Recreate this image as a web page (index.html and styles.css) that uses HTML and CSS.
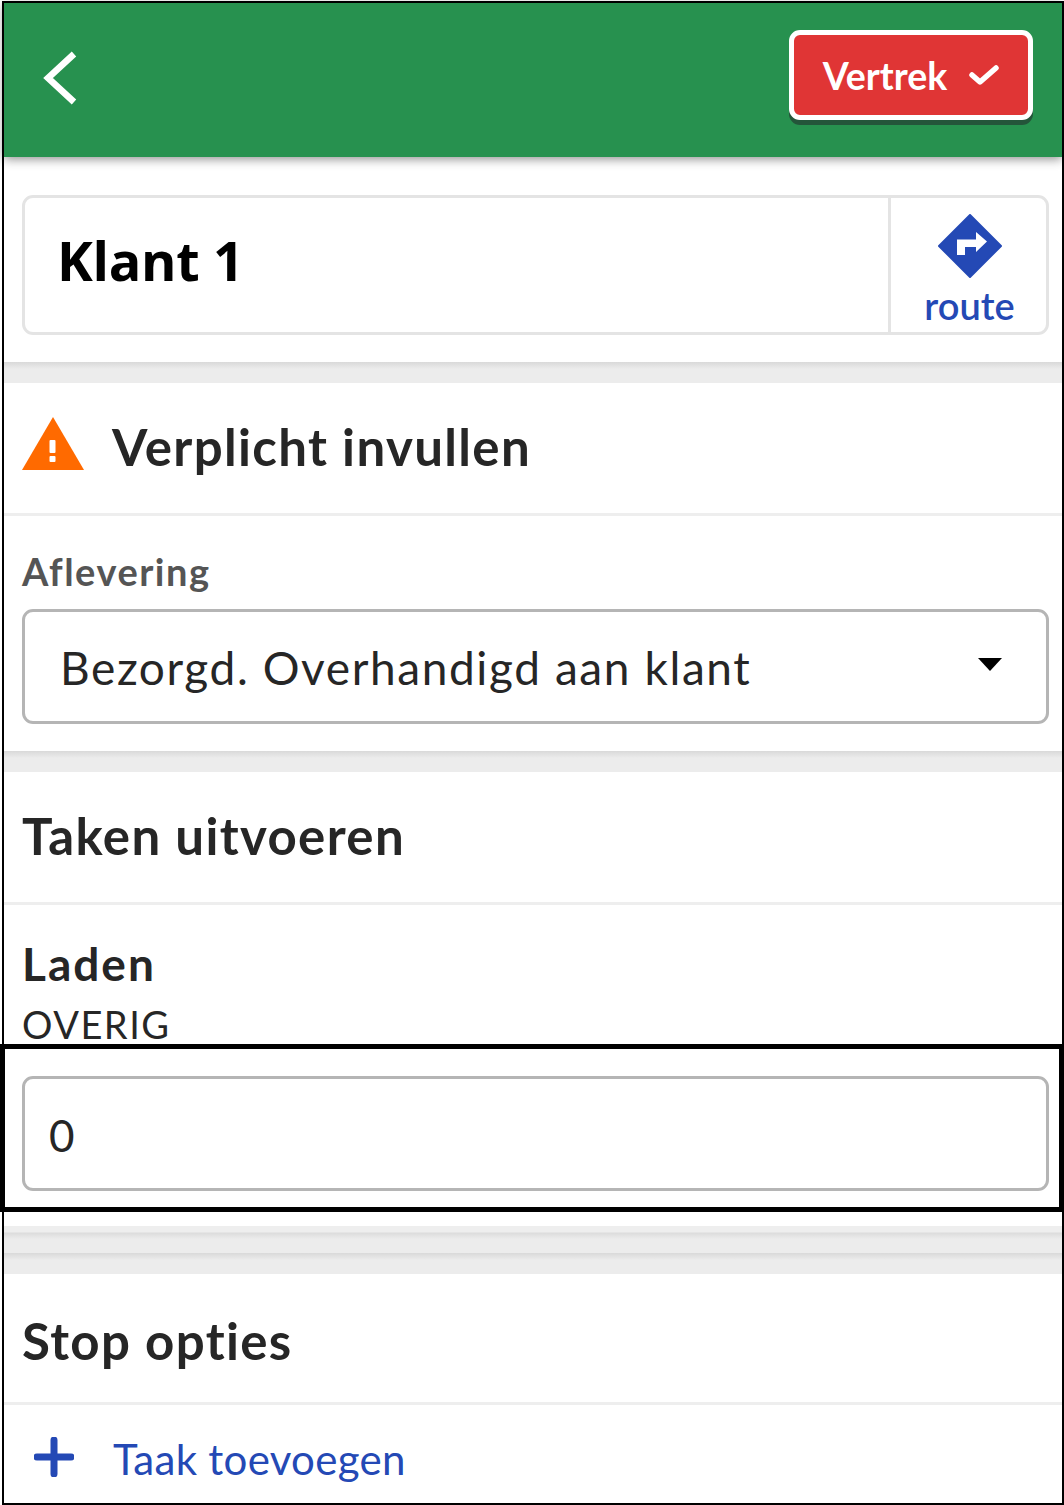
FILE: index.html
```html
<!DOCTYPE html>
<html lang="en">
<head>
    <meta charset="UTF-8">
    <meta name="viewport" content="width=device-width, initial-scale=1.0">
    <title>Klant 1</title>
    <link rel="stylesheet" href="styles.css">
</head>
<body>
    <div class="page">
        <header class="topbar">
            <svg class="back" width="37" height="54" viewBox="0 0 37 54"><path d="M33 3 L7 27 L33 51" fill="none" stroke="#fff" stroke-width="6.5"/></svg>
            <button class="depart" type="button">
                <span>Vertrek</span>
                <svg width="30" height="22" viewBox="0 0 30 22"><path d="M3 11 L11 18 L27 4" fill="none" stroke="#fff" stroke-width="5.5" stroke-linejoin="round" stroke-linecap="round"/></svg>
            </button>
        </header>

        <div class="customer-wrap">
            <div class="customer">
                <div class="customer-name">Klant 1</div>
                <div class="route">
                    <svg width="64" height="64" viewBox="0 0 64 64">
                        <path d="M32 1 L63 32 L32 63 L1 32 Z" fill="#2449b5" stroke="#2449b5" stroke-width="2" stroke-linejoin="round"/>
                        <path d="M19 41 V25.5 H38 V18 L49 27.5 L38 38 V33 H27 V41 Z" fill="#fff"/>
                    </svg>
                    <span>route</span>
                </div>
            </div>
        </div>
        <div class="band"></div>

        <section>
            <div class="section-head warn-head">
                <svg class="warn-icon" width="62" height="54" viewBox="0 0 62 54">
                    <path d="M31 1 L62 54 H0 Z" fill="#ff6a00"/>
                    <rect x="27.5" y="24" width="6" height="13" rx="1" fill="#fff"/>
                    <rect x="27.5" y="40" width="6" height="6" rx="1" fill="#fff"/>
                </svg>
                <h2>Verplicht invullen</h2>
            </div>
            <div class="field">
                <label class="field-label">Aflevering</label>
                <div class="select">
                    <span>Bezorgd. Overhandigd aan klant</span>
                    <i class="caret"></i>
                </div>
            </div>
        </section>
        <div class="band"></div>

        <section>
            <div class="section-head">
                <h2>Taken uitvoeren</h2>
            </div>
            <div class="task">
                <div class="task-name">Laden</div>
                <div class="task-type">OVERIG</div>
            </div>
            <div class="highlight">
                <div class="text-input">0</div>
            </div>
        </section>
        <div class="band band-double"></div>
        <div class="band"></div>

        <section>
            <div class="section-head stop-head">
                <h2>Stop opties</h2>
            </div>
            <div class="add-row">
                <svg width="40" height="40" viewBox="0 0 40 40"><path d="M20 3 V37 M3 20 H37" fill="none" stroke="#2449b5" stroke-width="7" stroke-linecap="round"/></svg>
                <span>Taak toevoegen</span>
            </div>
        </section>
    </div>
</body>
</html>
```

FILE: styles.css
```css
* {
    box-sizing: border-box;
}
body {
    margin: 0;
    font-family: Lato, "Open Sans", sans-serif;
    color: #262626;
    background: #fff;
    overflow: hidden;
}
.page {
    width: 1062px;
    height: 1504px;
    margin: 1px 0 0 2px;
    border: 2px solid #000;
}
.topbar {
    height: 154px;
    background: #27914f;
    box-shadow: 0 2px 10px rgba(0, 0, 0, 0.45);
    display: flex;
    align-items: flex-start;
    justify-content: space-between;
    padding: 27px 29px 0 37px;
    position: relative;
}
.back {
    margin-top: 21px;
}
.depart {
    width: 244px;
    height: 90px;
    background: #e03535;
    border: 5px solid #fff;
    border-radius: 11px;
    box-shadow: 0 5px 0 #24553a;
    color: #fff;
    font: 700 37.5px Lato, sans-serif;
    display: flex;
    align-items: center;
    justify-content: center;
    gap: 22px;
    padding: 0;
}
.customer-wrap {
    padding: 38px 13px 27px 18px;
}
.customer {
    height: 140px;
    border: 3px solid #e4e4e4;
    border-radius: 11px;
    display: flex;
}
.customer-name {
    flex: 1;
    font: bold 54px "Open Sans", sans-serif;
    letter-spacing: -0.3px;
    color: #000;
    padding-left: 32px;
    line-height: 124px;
}
.route {
    width: 158px;
    border-left: 3px solid #e4e4e4;
    display: flex;
    flex-direction: column;
    align-items: center;
    padding: 16px 0 0 2px;
    color: #2449b5;
    font-size: 38px;
    font-weight: 600;
    line-height: 46px;
}
.route svg {
    margin-bottom: 4px;
}
.band {
    height: 21px;
    background: linear-gradient(#d9d9d9, #ececec 7px);
}
.band-double {
    height: 27px;
    background: linear-gradient(#eeeeee 6px, #dcdcdc 7px, #ececec 13px);
}
.section-head {
    height: 133px;
    border-bottom: 3px solid #eee;
    display: flex;
    align-items: center;
    padding: 0 0 4px 18px;
}
.section-head h2 {
    margin: 0;
    font-size: 51px;
    font-weight: 700;
    letter-spacing: 1.35px;
}
.warn-head {
    gap: 28px;
}
.warn-icon {
    margin-top: -7px;
}
.stop-head {
    height: 131px;
    padding: 4px 0 0 18px;
}
.field {
    padding: 31px 13px 27px 18px;
}
.field-label {
    display: block;
    font-size: 38px;
    font-weight: 700;
    letter-spacing: 1.5px;
    color: #555;
    line-height: 48px;
    margin-bottom: 14px;
}
.select {
    height: 115px;
    border: 3px solid #b5b5b5;
    border-radius: 11px;
    display: flex;
    align-items: center;
    justify-content: space-between;
    padding: 2px 44px 0 35px;
    font-size: 46px;
    letter-spacing: 1.6px;
}
.caret {
    width: 0;
    height: 0;
    border-left: 12px solid transparent;
    border-right: 12px solid transparent;
    border-top: 13px solid #000;
    margin-top: -6px;
}
.task {
    height: 139px;
    padding: 33px 18px 0;
}
.task-name {
    font-size: 46px;
    font-weight: 700;
    letter-spacing: 2px;
    line-height: 52px;
}
.task-type {
    font-size: 38px;
    letter-spacing: 1.5px;
    line-height: 46px;
    margin-top: 11px;
}
.highlight {
    position: relative;
    height: 168px;
    margin: 0 -2px 14px -4px;
    border: 5px solid #000;
    padding: 27px 10px 0 17px;
    background: #fff;
}
.text-input {
    height: 115px;
    border: 3px solid #b5b5b5;
    border-radius: 11px;
    padding-left: 24px;
    font-size: 44px;
    line-height: 112px;
}
.add-row {
    display: flex;
    align-items: flex-start;
    gap: 39px;
    padding: 29px 0 0 30px;
    color: #2449b5;
    font-size: 42px;
    letter-spacing: 0.3px;
}
.add-row svg {
    margin-top: 3px;
}
```
